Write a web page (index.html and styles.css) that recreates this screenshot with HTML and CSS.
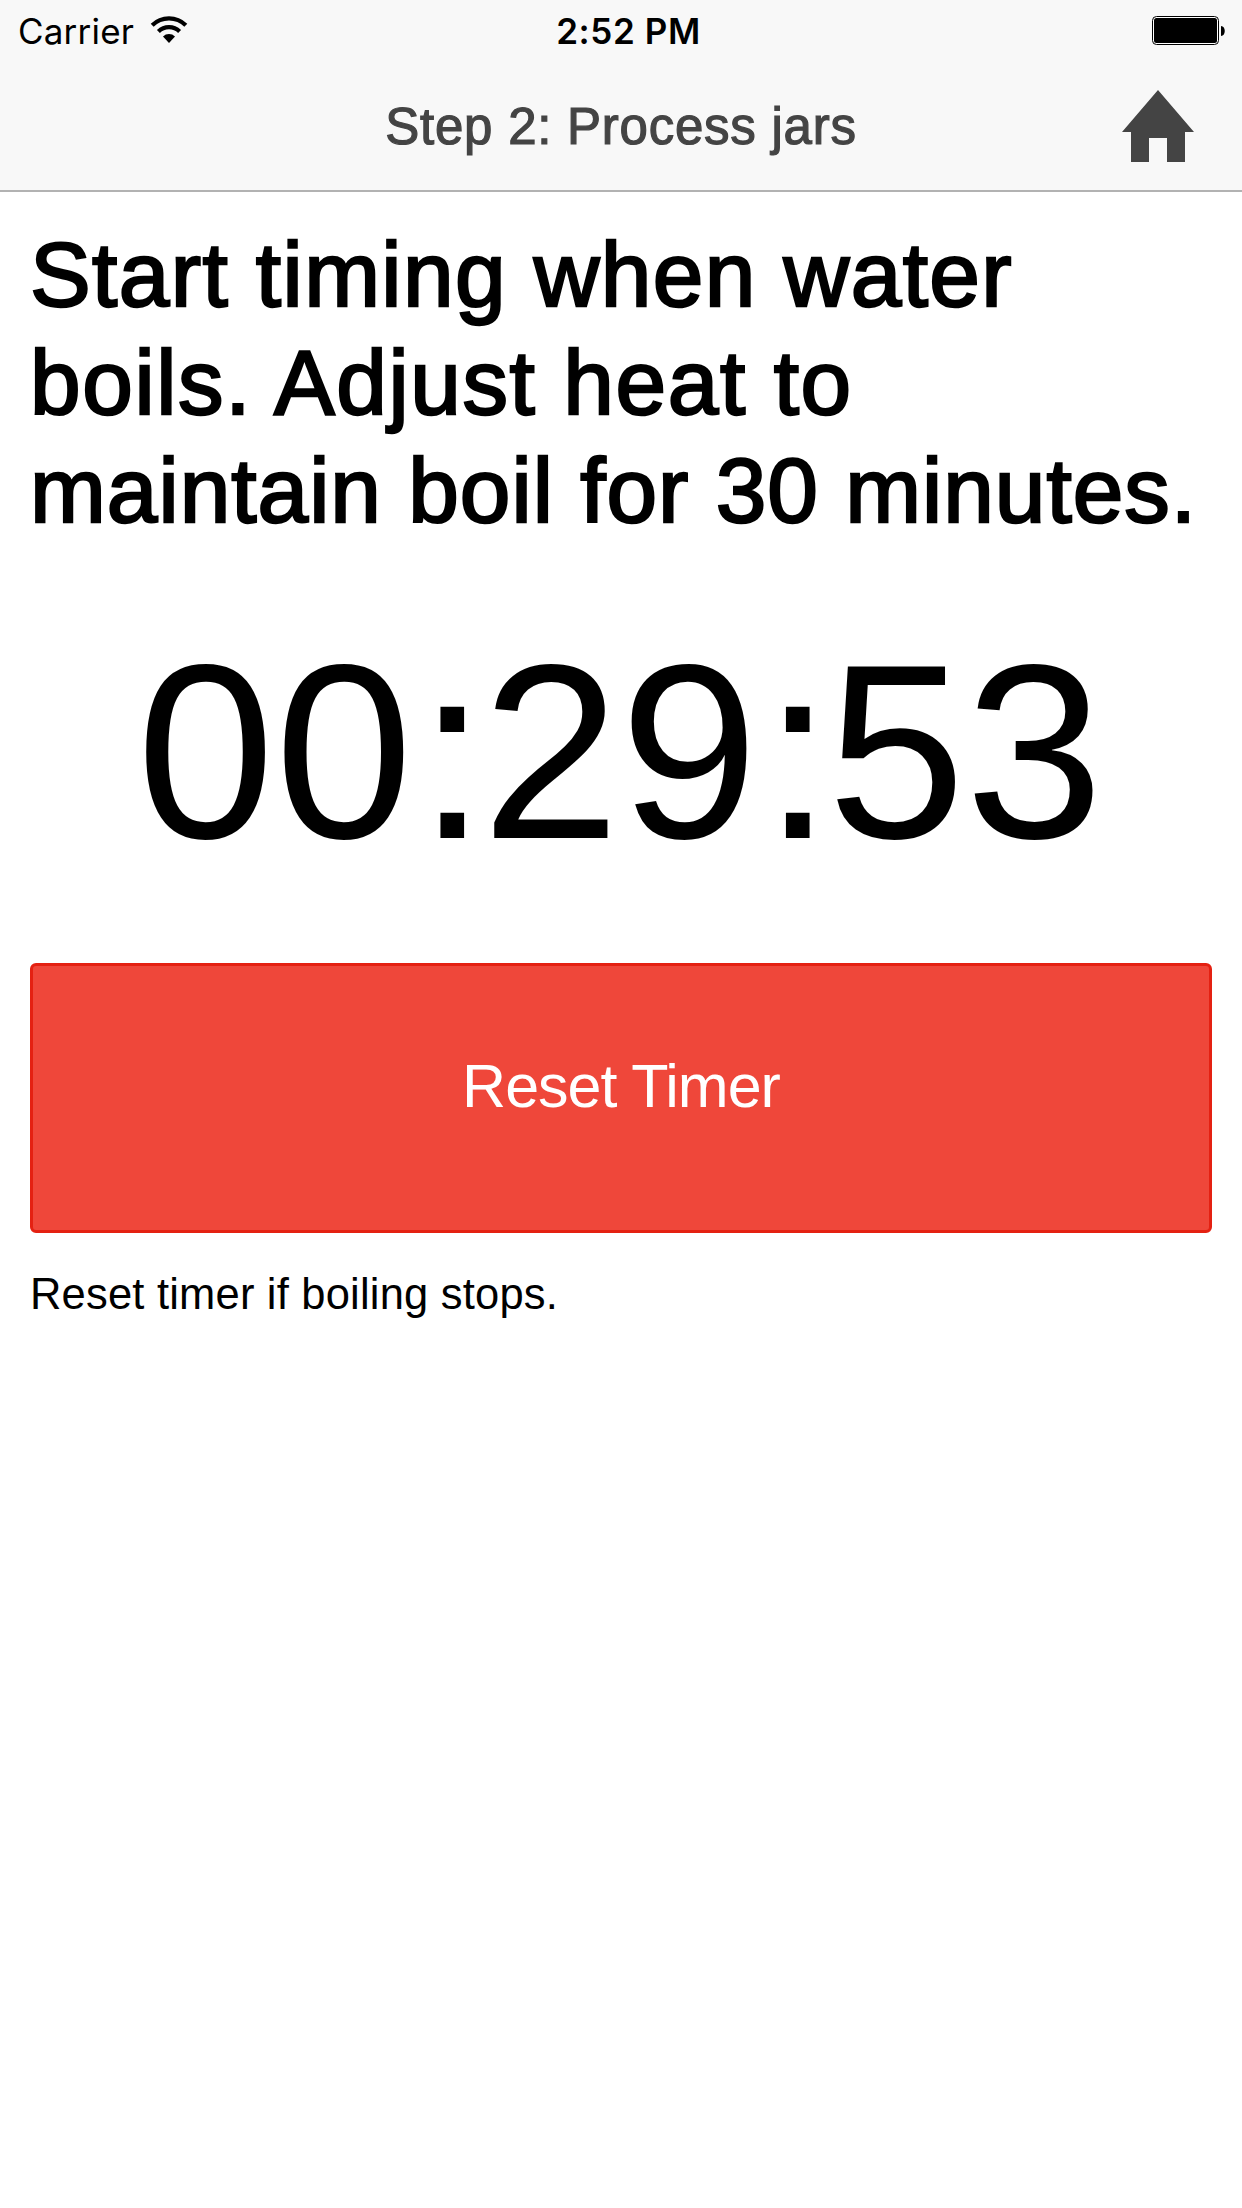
FILE: index.html
```html
<!DOCTYPE html>
<html lang="en">
<head>
<meta charset="utf-8">
<title>Step 2: Process jars</title>
<link rel="stylesheet" href="styles.css">
</head>
<body>
<header class="header">
  <div class="status">
    <div class="status-left">
      <span class="carrier">Carrier</span>
      <svg class="wifi" width="38" height="28" viewBox="0 0 38 28" aria-hidden="true">
        <g fill="none" stroke="#000" stroke-width="4.2">
          <path d="M2.2 9.2A23.9 23.9 0 0 1 35.8 9.2"/>
          <path d="M8.4 15.5A15.2 15.2 0 0 1 29.6 15.5"/>
        </g>
        <path d="M13 20.5A8.5 8.5 0 0 1 25 20.5L19 27Z"/>
      </svg>
    </div>
    <span class="time">2:52 PM</span>
    <svg class="battery" width="74" height="29" viewBox="0 0 74 29" aria-hidden="true">
      <rect x=".5" y=".5" width="66" height="28" rx="4" fill="#fff" stroke="#000"/>
      <rect x="2" y="2" width="63" height="25" rx="2.5"/>
      <path d="M69 10c5 0 5 10 0 10z"/>
    </svg>
  </div>
  <div class="navbar">
    <h2 class="title">Step 2: Process jars</h2>
    <svg class="home" width="72" height="72" viewBox="0 0 72 72" fill="#444" role="img" aria-label="Home">
      <path d="M36 0L72 42H63V72H45V48H27V72H9V42H0Z"/>
    </svg>
  </div>
</header>
<main class="content">
  <h1 class="instruction">
    <span class="line">Start timing when water</span>
    <span class="line line-wide">boils. Adjust heat to</span>
    <span class="line line-tight">maintain boil for 30 minutes.</span>
  </h1>
  <div class="timer">00<span class="colon">:</span>29<span class="colon">:</span>53</div>
  <button class="reset" type="button">Reset Timer</button>
  <p class="note">Reset timer if boiling stops.</p>
</main>
</body>
</html>
```

FILE: styles.css
```css
* { box-sizing: border-box; }

body {
  margin: 0;
  min-height: 2208px;
  background: #fff;
  color: #000;
  font-family: "Liberation Sans", Arial, sans-serif;
}

.header {
  height: 192px;
  background: #f8f8f8;
  border-bottom: 2px solid #b2b2b2;
}

.status {
  display: grid;
  grid-template-columns: 1fr auto 1fr;
  align-items: start;
  height: 60px;
  padding: 0 16px 0 18px;
  font-family: Inter, sans-serif;
  font-size: 35px;
  line-height: 62px;
}

.status-left { display: flex; }
.carrier { letter-spacing: 0.2px; }

.wifi { margin: 16px 0 0 16px; }

.time {
  padding-left: 13px;
  font-weight: 600;
  letter-spacing: 0.6px;
}

.battery {
  justify-self: end;
  margin-top: 16px;
}

.navbar {
  display: grid;
  grid-template-columns: 1fr auto 1fr;
  height: 130px;
  padding: 0 48px;
}

.title {
  grid-column: 2;
  margin: 0;
  color: #444;
  font-size: 51px;
  font-weight: 400;
  line-height: 134px;
  letter-spacing: 0.75px;
  -webkit-text-stroke: 1.2px #444;
}

.home {
  justify-self: end;
  margin-top: 30px;
}

.content {
  display: flex;
  flex-direction: column;
  padding: 29px 30px;
}

.instruction {
  margin: 0;
  font-size: 91px;
  font-weight: 400;
  line-height: 108px;
  white-space: nowrap;
  -webkit-text-stroke: 2.4px #000;
}

.line {
  display: block;
  letter-spacing: 1.4px;
}

.line-wide { letter-spacing: 1.6px; }
.line-tight { letter-spacing: 1px; }

.timer {
  margin: 58px 2px 0 0;
  font-size: 248.4px;
  line-height: 298px;
  text-align: center;
}

.colon { margin: 0 -5px 0 5px; }

.reset {
  height: 270px;
  margin-top: 62px;
  padding: 0 0 24px;
  border: 3px solid #e42112;
  border-radius: 6px;
  background: #ef473a;
  color: #fff;
  font-family: inherit;
  font-size: 61px;
  letter-spacing: -1px;
}

.note {
  margin: 31px 0 0;
  font-size: 43.5px;
  line-height: 60px;
  letter-spacing: 0.2px;
}
```
